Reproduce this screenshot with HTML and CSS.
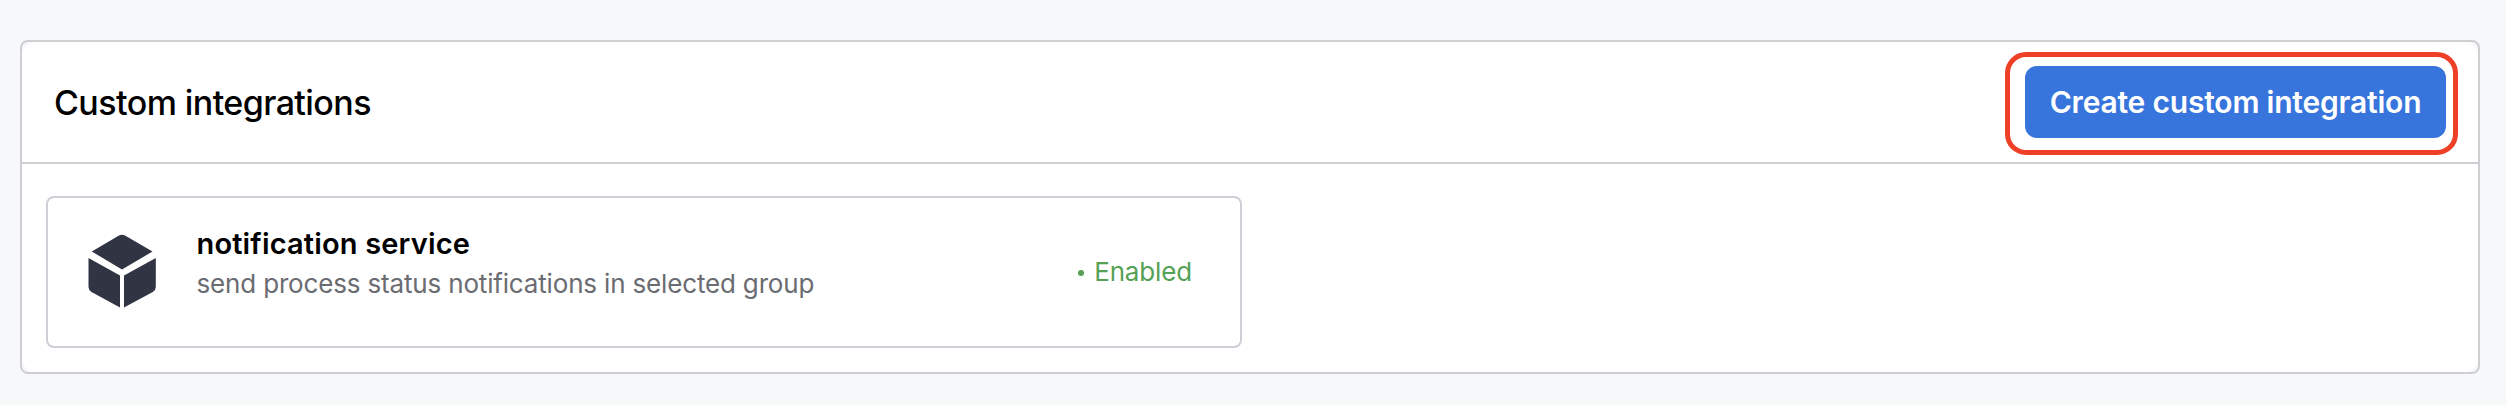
FILE: index.html
```html
<!DOCTYPE html>
<html lang="en"><head><meta charset="utf-8"><title>Custom integrations</title><link rel="stylesheet" href="styles.css"></head>
<body>
<section class="panel">
<header class="panel-header"><h1 class="panel-title">Custom integrations</h1>
<div class="highlight"><button class="create-button">Create custom integration</button></div></header>
<div class="panel-body"><article class="card">
<svg class="cube" viewBox="0 0 72 76"><path d="M33 3.600q3-1.800 6 0L66.500 19.500 36 37.500 5.800 19.500Z"/><path d="M2.500 26 34 43.500V75.500L5.500 60Q2.500 58 2.500 55Z"/><path d="M69.800 26 38 43.500V75.500L66.800 60Q69.800 58 69.800 55Z"/></svg>
<div class="info"><h2 class="name">notification service</h2><p class="description">send process status notifications in selected group</p></div>
<div class="status"><i class="dot"></i><span>Enabled</span></div>
</article></div>
</section>
</body></html>
```
FILE: styles.css
```css
*{box-sizing:border-box}
body{margin:0;height:406px;padding:40px 26px 0 20px;background:#f6f8fa;border-bottom:1px solid #fafbfb;font-family:Inter,"Liberation Sans",sans-serif;color:#000}
.panel{height:334px;border:2px solid #cfcfd3;border-radius:8px;background:#f6f8fa}
.panel-header{height:122px;display:flex;align-items:flex-start;justify-content:space-between;padding:10px 20px 0 32px;border-bottom:2px solid #cfcfd4;background:#fff;border-radius:14px 14px 0 0}
.panel-title{margin:0;padding-top:29px;font-size:34px;font-weight:500;line-height:44px;letter-spacing:-.57px}
.highlight{width:453px;height:103px;border:5px solid #ee4027;border-radius:21px;padding:9px 7px 0 15px}
.create-button{display:block;width:421px;height:72px;border:0;border-radius:12px;background:#3775dc;color:#fff;font:600 30px/40px Inter,sans-serif;letter-spacing:-.2px;padding:0;white-space:nowrap}
.panel-body{height:208px;padding:32px 24px;background:#fff;border-radius:0 0 14px 14px}
.card{width:1196px;height:152px;border:2px solid #cfcfd6;border-radius:8px;display:flex;padding:34px 48px 0 38px}
.cube{width:72px;height:76px;fill:#313543}
.info{margin:-8px 0 0 38.500px;flex:1}
.name{margin:0;font-size:29px;font-weight:600;line-height:40px;letter-spacing:.16px}
.description{margin:0;font-size:26px;line-height:40px;letter-spacing:-.165px;color:#6b6c71}
.status{display:flex;align-items:center;color:#55a155;font-size:26px;letter-spacing:-.15px;height:79px}
.dot{width:6px;height:6px;border-radius:50%;background:#55a155;margin:2px 10px 0 0}
```
